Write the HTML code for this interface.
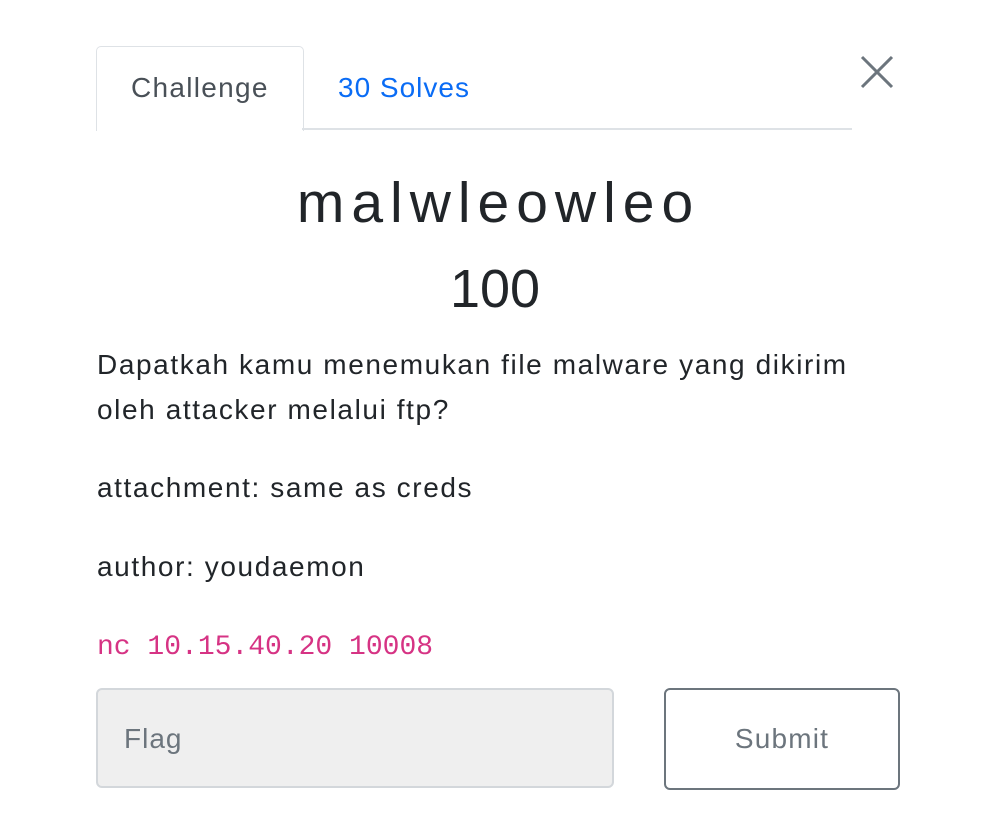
<!DOCTYPE html>
<html><head><style>
body{margin:0;width:990px;height:834px;background:#fff;font-family:"Liberation Sans",sans-serif;color:#212529;position:relative;overflow:hidden}
.a{position:absolute;white-space:nowrap}
.tab{position:absolute;left:96px;top:46px;width:206px;height:84px;border:1px solid #dee2e6;border-bottom:none;border-radius:5px 5px 0 0;background:#fff}
.line{position:absolute;left:302px;top:128px;width:550px;height:2px;background:#dee2e6}
.b{font-size:28px;letter-spacing:1.6px}
</style></head><body>
<div class="tab"></div><div class="line"></div>
<div class="a" style="left:131px;top:72px;font-size:28px;letter-spacing:1.3px;color:#495057">Challenge</div>
<div class="a" style="left:338px;top:72px;font-size:28px;letter-spacing:1px;color:#0a6cf5">30 Solves</div>
<svg class="a" style="left:860px;top:55px" width="34" height="34"><path d="M2 2L32 32M32 2L2 32" stroke="#6c757d" stroke-width="3"/></svg>
<div class="a" style="left:0;width:990px;text-align:center;top:170px;font-size:57px;letter-spacing:7px;text-indent:7px">malwleowleo</div>
<div class="a" style="left:0;width:990px;text-align:center;top:258px;font-size:54px">100</div>
<div class="a b" style="left:97px;top:342px;line-height:45px">Dapatkah kamu menemukan file malware yang dikirim<br>oleh attacker melalui ftp?</div>
<div class="a b" style="left:97px;top:472px">attachment: same as creds</div>
<div class="a b" style="left:97px;top:551px">author: youdaemon</div>
<div class="a" style="left:97px;top:632px;font-size:28px;font-family:'Liberation Mono',monospace;color:#d63384">nc 10.15.40.20 10008</div>
<div class="a" style="left:96px;top:688px;width:518px;height:100px;background:#efefef;border:2px solid #d3d7db;border-radius:6px;box-sizing:border-box"></div>
<div class="a" style="left:124px;top:723px;font-size:28px;letter-spacing:1px;color:#6c757d">Flag</div>
<div class="a" style="left:664px;top:688px;width:236px;height:102px;border:2px solid #6c757d;border-radius:6px;box-sizing:border-box;text-align:center;line-height:98px;font-size:28px;letter-spacing:1.2px;color:#6c757d">Submit</div>
</body></html>
